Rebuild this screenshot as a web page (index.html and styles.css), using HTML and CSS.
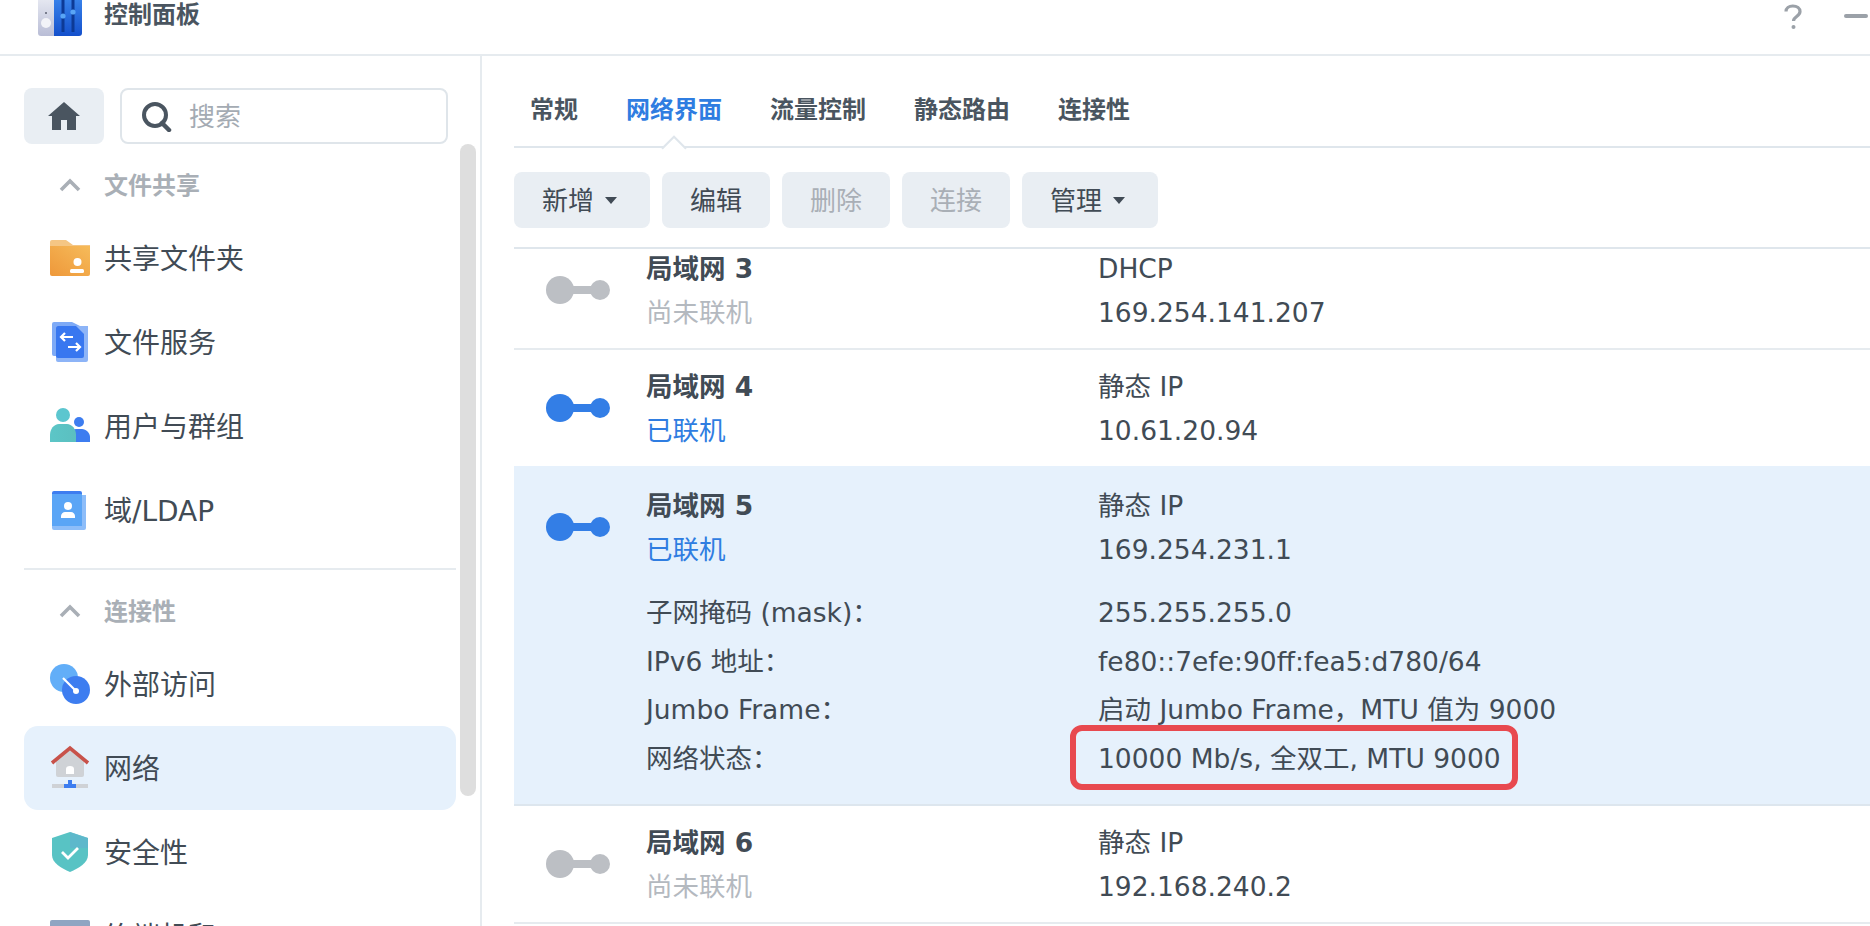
FILE: index.html
```html
<!DOCTYPE html>
<html lang="zh-CN">
  <head>
    <meta charset="utf-8" />
    <title>控制面板</title>
    <link rel="stylesheet" href="styles.css">
  </head>
  <body>
    <div class="window">
      <header class="title-bar">
        <svg class="app-icon" viewBox="0 0 44 44">
          <defs>
            <linearGradient id="appBlue" x1="0" y1="0" x2="0" y2="1"><stop offset="0" stop-color="#3f8cf0"/><stop offset="1" stop-color="#1450cc"/></linearGradient>
            <linearGradient id="appGrey" x1="0" y1="0" x2="0" y2="1"><stop offset="0" stop-color="#eef0f6"/><stop offset="1" stop-color="#b9bdd6"/></linearGradient>
          </defs>
          <path d="M3 0h14v44H3a3 3 0 0 1-3-3V3a3 3 0 0 1 3-3z" fill="url(#appGrey)"/>
          <path d="M16 0h25a3 3 0 0 1 3 3v38a3 3 0 0 1-3 3H16z" fill="url(#appBlue)"/>
          <circle cx="8" cy="31" r="5" fill="#f2f3f8"/>
          <circle cx="8" cy="21" r="1" fill="#5b6070"/>
          <path d="M25 8v32M35 8v32" stroke="#0d3a96" stroke-width="3"/>
          <circle cx="25" cy="24" r="2.6" fill="#59a5f5"/>
          <circle cx="35" cy="20" r="2.6" fill="#59a5f5"/>
        </svg>
        <div class="app-name">控制面板</div>
        <div class="window-buttons">
          <svg class="help-icon" viewBox="0 0 18 26"><path d="M2 7.5C2 4 5 2 8.800 2 13 2 16 4.300 16 7.600c0 4.900-6.500 4.900-6.500 9.400" fill="none" stroke="#9ba1a8" stroke-width="3.200"/><circle cx="9.500" cy="23" r="2" fill="#9ba1a8"/></svg>
          <div class="minimize"></div>
        </div>
      </header>

      <div class="panes">
        <aside class="sidebar">
          <div class="side-top">
            <div class="home-btn">
              <svg width="32" height="28" viewBox="0 0 32 28"><path d="M16 0 32 14h-4v14H19V18h-6v10H4V14H0z" fill="#4a5560"/></svg>
            </div>
            <div class="search-box">
              <svg width="30" height="30" viewBox="0 0 30 30"><circle cx="13" cy="13" r="11" fill="none" stroke="#4a5560" stroke-width="4"/><path d="m20 21 7 7" stroke="#4a5560" stroke-width="4.500" stroke-linecap="round"/></svg>
              <span>搜索</span>
            </div>
          </div>

          <div class="side-heading">
            <svg width="22" height="14" viewBox="0 0 22 14"><path d="M2 12 11 3l9 9" fill="none" stroke="#a9afb6" stroke-width="3.600"/></svg>
            <span>文件共享</span>
          </div>
          <div class="side-item">
            <svg class="side-icon" viewBox="0 0 40 40">
              <defs><linearGradient id="folder" x1="0" y1="1" x2="1" y2="0"><stop offset="0" stop-color="#ee983a"/><stop offset="1" stop-color="#f6bb5a"/></linearGradient></defs>
              <path d="M0 4a2 2 0 0 1 2-2h14l7 5h17v10H0z" fill="#f5c684"/>
              <path d="M0 8h40v28a2 2 0 0 1-2 2H2a2 2 0 0 1-2-2z" fill="url(#folder)"/>
              <circle cx="27.500" cy="24" r="4" fill="#fff"/>
              <rect x="20" y="31" width="14" height="4" rx="1.500" fill="#fff"/>
            </svg>
            <span>共享文件夹</span>
          </div>
          <div class="side-item">
            <svg class="side-icon" viewBox="0 0 40 40">
              <path d="M2 2a2 2 0 0 1 2-2h18l12 6v28H4a2 2 0 0 1-2-2z" fill="#7eaaf6"/>
              <path d="M6 4h32v34a2 2 0 0 1-2 2H8a2 2 0 0 1-2-2z" fill="#8db4f7"/>
              <path d="M6 6a2 2 0 0 1 2-2h18l8 8v22a2 2 0 0 1-2 2H8a2 2 0 0 1-2-2z" fill="#3877f0"/>
              <path d="M23 15H11m4-4-4 4 4 4M18 25h12m-4-4 4 4-4 4" fill="none" stroke="#fff" stroke-width="2.200"/>
            </svg>
            <span>文件服务</span>
          </div>
          <div class="side-item">
            <svg class="side-icon" viewBox="0 0 40 40">
              <defs><linearGradient id="teal" x1="0" y1="0" x2="1" y2="0"><stop offset="0" stop-color="#5cc6c7"/><stop offset="1" stop-color="#5bbfc0"/></linearGradient></defs>
              <circle cx="29" cy="16" r="5" fill="#3d7df0"/>
              <path d="M18 36v-5c0-4 4-8 8-8h6c4 0 8 4 8 8v5z" fill="#3d7df0"/>
              <circle cx="13" cy="9" r="7" fill="#5cc6cf"/>
              <path d="M0 36v-7c0-6 4-11 9-11h8c5 0 9 5 9 11v7z" fill="url(#teal)"/>
            </svg>
            <span>用户与群组</span>
          </div>
          <div class="side-item">
            <svg class="side-icon" viewBox="0 0 40 40">
              <path d="M2 3a2 2 0 0 1 2-2h26a2 2 0 0 1 2 2v4H2z" fill="#3d7df0"/>
              <path d="M6 5h30v33a2 2 0 0 1-2 2H4a2 2 0 0 1-2-2V9z" fill="#8dbdf9"/>
              <path d="M2 4h30v32H2z" fill="#5aa5f6"/>
              <circle cx="18" cy="16" r="4" fill="#fff"/>
              <path d="M11 28v-2c0-2 2-4 4-4h6c2 0 4 2 4 4v2z" fill="#fff"/>
            </svg>
            <span>域/LDAP</span>
          </div>

          <div class="side-divider"></div>

          <div class="side-heading">
            <svg width="22" height="14" viewBox="0 0 22 14"><path d="M2 12 11 3l9 9" fill="none" stroke="#a9afb6" stroke-width="3.600"/></svg>
            <span>连接性</span>
          </div>
          <div class="side-item">
            <svg class="side-icon" viewBox="0 0 40 40">
              <circle cx="14" cy="14" r="14" fill="#62aef8"/>
              <circle cx="26" cy="26" r="14" fill="#3d7df0"/>
              <path d="m13 14 13 13" stroke="#fff" stroke-width="2.200"/>
              <circle cx="26" cy="27" r="3" fill="#fff"/>
            </svg>
            <span>外部访问</span>
          </div>
          <div class="side-item active">
            <svg class="side-icon" viewBox="0 0 40 40">
              <path d="M6 12h28v15a2 2 0 0 1-2 2H8a2 2 0 0 1-2-2z" fill="#cfd2d6"/>
              <path d="M20 0 34 12H6z" fill="#cfd2d6"/>
              <path d="M16 21a4 3 0 0 1 8 0v5h-8z" fill="#fff"/>
              <path d="M2 15 20 0l18 15" fill="none" stroke="#c8524a" stroke-width="3.600"/>
              <rect x="2" y="36" width="36" height="4" fill="#cfd2d6"/>
              <path d="M18 32h4v4h4v4H14v-4h4z" fill="#3d7df0"/>
            </svg>
            <span>网络</span>
          </div>
          <div class="side-item">
            <svg class="side-icon" viewBox="0 0 40 40">
              <path d="M20 0 38 6v17c0 8-9 13-18 17C11 36 2 31 2 23V6z" fill="#58c3c4"/>
              <path d="M20 0 38 6v10H20z" fill="#5fb3ce" opacity=".7"/>
              <path d="m12 20 6 6 10-10" fill="none" stroke="#fff" stroke-width="2.800"/>
            </svg>
            <span>安全性</span>
          </div>
          <div class="side-item">
            <svg class="side-icon" viewBox="0 0 40 40">
              <rect x="0" y="4" width="40" height="34" rx="2" fill="#8ea5c2"/>
            </svg>
            <span>终端机和 SNMP</span>
          </div>
          <div class="side-scroll"></div>
        </aside>

        <main class="content">
          <nav class="tabs">
            <div class="tab">常规</div>
            <div class="tab current">网络界面</div>
            <div class="tab">流量控制</div>
            <div class="tab">静态路由</div>
            <div class="tab">连接性</div>
          </nav>

          <div class="toolbar">
            <div class="btn">新增<i class="caret"></i></div>
            <div class="btn">编辑</div>
            <div class="btn disabled">删除</div>
            <div class="btn disabled">连接</div>
            <div class="btn">管理<i class="caret"></i></div>
          </div>

          <div class="net-list">
            <div class="net-row first">
              <div class="net-head">
                <div class="plug off"><b></b><u></u><b></b></div>
                <div><div class="net-name">局域网 3</div><div class="net-state off">尚未联机</div></div>
                <div><div class="net-val">DHCP</div><div class="net-val">169.254.141.207</div></div>
              </div>
            </div>
            <div class="net-row">
              <div class="net-head">
                <div class="plug"><b></b><u></u><b></b></div>
                <div><div class="net-name">局域网 4</div><div class="net-state">已联机</div></div>
                <div><div class="net-val">静态 IP</div><div class="net-val">10.61.20.94</div></div>
              </div>
            </div>
            <div class="net-row selected">
              <div class="net-head">
                <div class="plug"><b></b><u></u><b></b></div>
                <div><div class="net-name">局域网 5</div><div class="net-state">已联机</div></div>
                <div><div class="net-val">静态 IP</div><div class="net-val">169.254.231.1</div></div>
              </div>
              <div class="net-detail">
                <div>子网掩码 (mask)：</div><div>255.255.255.0</div>
                <div>IPv6 地址：</div><div>fe80::7efe:90ff:fea5:d780/64</div>
                <div>Jumbo Frame：</div><div>启动 Jumbo Frame，MTU 值为 9000</div>
                <div>网络状态：</div><div><span class="marked">10000 Mb/s, 全双工, MTU 9000</span></div>
              </div>
            </div>
            <div class="net-row">
              <div class="net-head">
                <div class="plug off"><b></b><u></u><b></b></div>
                <div><div class="net-name">局域网 6</div><div class="net-state off">尚未联机</div></div>
                <div><div class="net-val">静态 IP</div><div class="net-val">192.168.240.2</div></div>
              </div>
            </div>
          </div>
        </main>
      </div>
    </div>
  </body>
</html>
```

FILE: styles.css
```css
*,:after,:before{box-sizing:border-box}
html,body{height:100%}
body{
  margin:0;
  overflow:hidden;
  color:#414b55;
  background:#fff;
  font:26px/44px 'DejaVu Sans','Noto Sans CJK SC',sans-serif;
}
.window{height:926px;display:flex;flex-direction:column;overflow:hidden}

/* title bar */
.title-bar{
  height:56px;
  flex:none;
  display:flex;
  padding-left:38px;
  border-bottom:2px solid #e6ebef;
  overflow:hidden;
}
.app-icon{width:44px;height:44px;margin-top:-8px;flex:none}
.app-name{margin-left:22px;font-size:24px;line-height:30px;font-weight:700;color:#4a5560}
.window-buttons{margin-left:auto;display:flex;align-items:flex-start}
.help-icon{width:18px;height:26px;margin-top:4px}
.minimize{width:24px;height:4px;margin:14px 2px 0 42px;background:#9ba1a8;border-radius:2px}

.panes{flex:1;display:flex;min-height:0}

/* sidebar */
.sidebar{
  width:482px;
  flex:none;
  position:relative;
  overflow:hidden;
  border-right:2px solid #e6ebef;
}
.side-top{display:flex;gap:16px;padding:32px 0 0 24px}
.home-btn{
  width:80px;
  height:56px;
  display:flex;
  align-items:center;
  justify-content:center;
  background:#e9eef3;
  border-radius:8px;
}
.search-box{
  width:328px;
  height:56px;
  display:flex;
  align-items:center;
  gap:17px;
  padding:1px 0 0 20px;
  border:2px solid #dfe5ea;
  border-radius:8px;
  color:#a4abb3;
}
.side-heading{
  height:52px;
  margin:15px 0 5px;
  display:flex;
  align-items:center;
  padding-left:59px;
  font-size:24px;
  font-weight:700;
  color:#a9afb6;
}
.side-heading span{margin-left:23px;padding-top:2px}
.side-item{
  height:84px;
  margin:0 24px;
  padding-left:26px;
  display:flex;
  align-items:center;
  gap:14px;
  font-size:28px;
  border-radius:14px;
}
.side-item span{padding-top:3px}
.side-item.active{background:#e6f1fc}
.side-icon{width:40px;height:40px;flex:none;overflow:visible}
.side-divider{height:2px;margin:16px 24px 0;background:#e6ebef}
.side-scroll{
  position:absolute;
  top:88px;
  left:460px;
  width:16px;
  height:652px;
  background:#dedede;
  border-radius:8px;
}

/* right side */
.content{flex:1;min-width:0;padding-left:32px;display:flex;flex-direction:column}
.tabs{
  display:flex;
  gap:48px;
  padding:36px 0 18px 16px;
  border-bottom:2px solid #dfe6ec;
  font-size:24px;
  line-height:36px;
  font-weight:700;
  color:#4a5560;
}
.tab{position:relative}
.tab.current{color:#2f7de1}
.tab.current:before,.tab.current:after{
  content:'';
  position:absolute;
  left:50%;
  width:18px;
  height:18px;
  transform:translateX(-50%) rotate(45deg);
}
.tab.current:before{bottom:-29px;background:#dfe6ec}
.tab.current:after{bottom:-32px;background:#fff}

.toolbar{display:flex;gap:12px;padding:24px 0 19px}
.btn{
  height:56px;
  padding:2px 28px 0;
  display:flex;
  align-items:center;
  background:#e9eef3;
  border-radius:8px;
}
.btn.disabled{color:#a9afb6}
.caret{
  width:0;
  height:0;
  margin:-2px 5px 0 11px;
  border:6.500px solid transparent;
  border-top:7px solid #414b55;
  border-bottom:0;
}

.net-list{flex:1;min-height:0;overflow:hidden;border-top:2px solid #dfe6ec;font-size:26.500px}
.net-row{padding:15px 0 13px;border-bottom:2px solid #e6ebef}
.net-row.first{margin-top:-17px}
.net-row.selected{
  margin-top:-2px;
  padding:18px 0 21px;
  background:#e6f1fc;
  border-bottom-color:#dde6ee;
}
.net-head{display:grid;grid-template-columns:132px 452px 1fr;align-items:center}
.net-name{font-weight:700}
.net-state{color:#2f7de1}
.net-state.off{color:#b4b9bf}
.plug{display:flex;align-items:center;padding-left:32px;margin-top:-2px}
.plug b{width:20px;height:20px;border-radius:50%;background:#337ee6}
.plug b:first-child{width:28px;height:28px}
.plug u{width:18px;height:8px;margin:0 -1px;background:#337ee6}
.plug.off b,.plug.off u{background:#bcbfc4}
.net-detail{
  display:grid;
  grid-template-columns:452px 1fr;
  margin:17px 0 0 132px;
  line-height:48.500px;
}
.marked{position:relative;display:inline-block}
.marked:after{
  content:'';
  position:absolute;
  inset:-10px -17px -7px -28px;
  border:6px solid #e8494f;
  border-radius:12px;
}
```
